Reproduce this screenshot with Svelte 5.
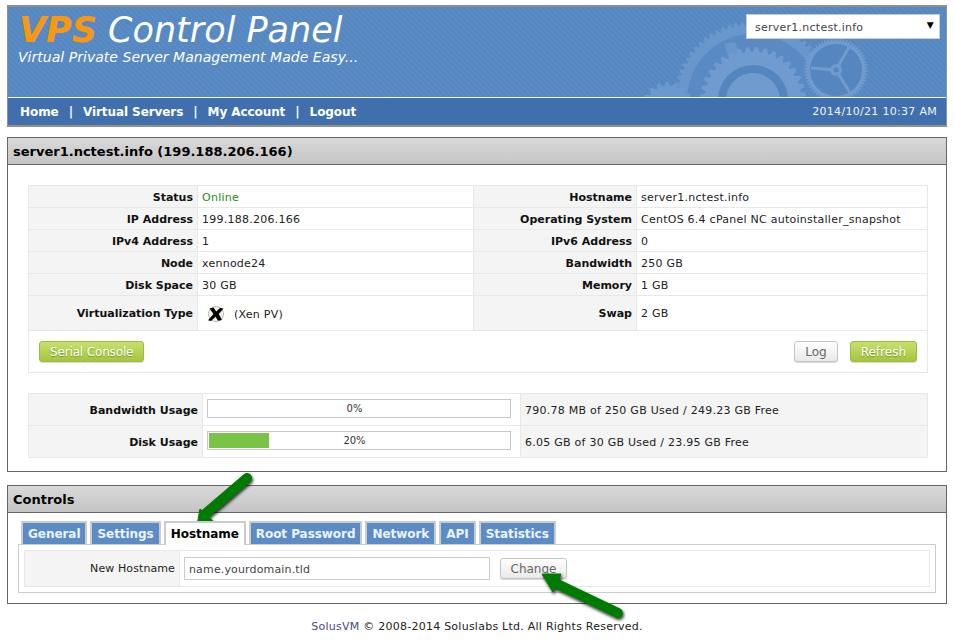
<script>
  const tabs = ['General', 'Settings', 'Hostname', 'Root Password', 'Network', 'API', 'Statistics'];
  const info = [
    ['Status', 'Online', 'Hostname', 'server1.nctest.info'],
    ['IP Address', '199.188.206.166', 'Operating System', 'CentOS 6.4 cPanel NC autoinstaller_snapshot'],
    ['IPv4 Address', '1', 'IPv6 Address', '0'],
    ['Node', 'xennode24', 'Bandwidth', '250 GB'],
    ['Disk Space', '30 GB', 'Memory', '1 GB']
  ];
  const usage = [
    { label: 'Bandwidth Usage', pct: 0, text: '790.78 MB of 250 GB Used / 249.23 GB Free' },
    { label: 'Disk Usage', pct: 20, text: '6.05 GB of 30 GB Used / 23.95 GB Free' }
  ];

  // toothed wheel outline
  function gear(cx, cy, r, teeth, depth) {
    let d = '';
    const step = (Math.PI * 2) / teeth;
    for (let i = 0; i < teeth; i++) {
      const a = i * step;
      const pts = [
        [r - depth, a],
        [r, a + step * 0.25],
        [r, a + step * 0.55],
        [r - depth, a + step * 0.8]
      ];
      for (const [rad, t] of pts) {
        d += (d ? 'L' : 'M') + (cx + rad * Math.cos(t)).toFixed(1) + ' ' + (cy + rad * Math.sin(t)).toFixed(1);
      }
    }
    return d + 'Z';
  }
</script>

<div class="page">
  <header class="top">
    <div class="banner">
      <svg class="gears" width="300" height="90" viewBox="0 0 300 90" aria-hidden="true">
        <g transform="translate(-624 -7)">
          <path d={gear(753, 100, 79, 72, 4)} fill="#6997cc" />
          <circle cx="753" cy="100" r="66" fill="#5a8ac3" />
          <path d="M724 44 L735 42 L742 62 L732 66Z" fill="#6997cc" />
          <path d={gear(668, 108, 26, 18, 4)} fill="#6c99cd" />
          <path d={gear(753, 100, 53, 36, 5)} fill="#6f9bcf" />
          <circle cx="753" cy="100" r="35" fill="#5585bf" />
          <circle cx="753" cy="100" r="27" fill="#6f9bcf" />
          <path d={gear(836, 70, 32, 60, 3)} fill="#6f9bcf" />
          <circle cx="836" cy="70" r="26" fill="#5686c0" />
          <path d="M811 68 L836 70 M836 70 L849 47 M836 70 L850 93" stroke="#6f9bcf" stroke-width="3" fill="none" />
          <circle cx="836" cy="70" r="6" fill="#6f9bcf" />
          <circle cx="836" cy="70" r="2.5" fill="#5686c0" />
        </g>
      </svg>
      <div class="brand">
        <h1><b>VPS</b> Control Panel</h1>
        <p>Virtual Private Server Management Made Easy...</p>
      </div>
      <div class="select">
        <span>server1.nctest.info</span>
        <i>▼</i>
      </div>
    </div>
    <nav>
      <div class="links">
        <a href="#home">Home</a><s>|</s><a href="#vs">Virtual Servers</a><s>|</s><a href="#acc">My Account</a><s>|</s><a href="#out">Logout</a>
      </div>
      <span class="date">2014/10/21 10:37 AM</span>
    </nav>
  </header>

  <section class="panel server">
    <h2>server1.nctest.info (199.188.206.166)</h2>
    <div class="body">
      <table class="info">
        <colgroup><col class="c1" /><col class="c2" /><col class="c3" /><col /></colgroup>
        <tbody>
          {#each info as row, i}
            <tr>
              <th>{row[0]}</th>
              <td class:online={i === 0}>{row[1]}</td>
              <th>{row[2]}</th>
              <td>{row[3]}</td>
            </tr>
          {/each}
          <tr class="tall">
            <th>Virtualization Type</th>
            <td>
              <span class="virt">
                <svg width="18" height="18" viewBox="0 0 18 18" aria-hidden="true">
                  <circle cx="9" cy="9" r="7.5" fill="#f2f2ea" stroke="#bbb" />
                  <path d="M2.5 3.5 L6.5 2.5 L9.2 6.5 L13 3 L16.5 3.5 L11.8 9 L15 15 L11 15.8 L8.6 11.8 L4 16 L1 15.2 L6.5 9Z" fill="#000" />
                </svg>
                <span class="virt-name">(Xen PV)</span>
              </span>
            </td>
            <th>Swap</th>
            <td>2 GB</td>
          </tr>
        </tbody>
      </table>
      <div class="actions">
        <button class="btn green">Serial Console</button>
        <span class="right">
          <button class="btn">Log</button>
          <button class="btn green">Refresh</button>
        </span>
      </div>

      <table class="usage">
        <tbody>
          {#each usage as u}
            <tr>
              <th>{u.label}</th>
              <td class="barcell">
                <div class="bar">
                  <div class="fill" style="width: {u.pct}%"></div>
                  <span>{u.pct}%</span>
                </div>
              </td>
              <td>{u.text}</td>
            </tr>
          {/each}
        </tbody>
      </table>
    </div>
  </section>

  <section class="panel controls">
    <h2>Controls</h2>
    <div class="ctl-body">
      <div class="tabs">
        {#each tabs as t}
          <button class="tab" class:active={t === 'Hostname'}>{t}</button>
        {/each}
      </div>
      <div class="tabbox">
        <div class="form">
          <label for="hn">New Hostname</label>
          <div class="field">
            <input id="hn" value="name.yourdomain.tld" />
            <button class="btn change">Change</button>
          </div>
        </div>
      </div>
    </div>
  </section>

  <footer><a href="#solus">SolusVM</a> © 2008-2014 Soluslabs Ltd. All Rights Reserved.</footer>

  <svg class="arrows" width="954" height="643" viewBox="0 0 954 643" aria-hidden="true">
    <defs>
      <filter id="sh" x="-30%" y="-30%" width="160%" height="160%">
        <feDropShadow dx="1" dy="2" stdDeviation="1.6" flood-color="#000" flood-opacity="0.8" />
      </filter>
    </defs>
    <g filter="url(#sh)" fill="#067a06" stroke="#067a06" stroke-linejoin="round">
      <path d="M247 478 L205 514" stroke-width="10" stroke-linecap="round" fill="none" />
      <path d="M197 526 L200 509 L216 524Z" stroke-width="1" />
      <path d="M618 613 L553 582" stroke-width="10" stroke-linecap="round" fill="none" />
      <path d="M542 574 L561 574 L553 592Z" stroke-width="1" />
    </g>
  </svg>
</div>

<style>
  :global(body) {
    background: #fff;
    font-family: "DejaVu Sans", Verdana, sans-serif;
    font-size: 11px;
    letter-spacing: 0.25px;
    color: #222;
  }

  .page {
    position: relative;
    width: 940px;
    height: 643px;
    padding: 5px 7px 0;
    overflow: hidden;
  }

  .top {
    border: 1px solid #8f8f8f;
    border-bottom-width: 2px;
    border-top-width: 2px;
    background: #3f70ad;
  }

  .banner {
    position: relative;
    height: 90px;
    display: flex;
    justify-content: space-between;
    border-bottom: 1px solid #fff;
    background: repeating-linear-gradient(45deg, #5587c1 0 2px, #5a8bc4 2px 4px);
  }

  .gears {
    position: absolute;
    left: 616px;
    top: 0;
  }

  .brand {
    position: relative;
    padding: 5px 0 0 10px;
    color: #fff;
  }

  h1 {
    margin: 0 0 0 1px;
    font-size: 35px;
    line-height: 36px;
    font-weight: normal;
    font-style: italic;
    letter-spacing: 0;
    white-space: nowrap;
  }

  h1 b {
    color: #f9980f;
    font-weight: bold;
    letter-spacing: 0;
  }

  .brand p {
    margin: 0;
    font-size: 14px;
    line-height: 18px;
    font-style: italic;
    letter-spacing: 0.03px;
  }

  .select {
    position: relative;
    height: 23px;
    width: 184px;
    margin: 7px 6px 0 0;
    padding: 0 0 0 8px;
    display: flex;
    justify-content: space-between;
    align-items: center;
    background: #fff;
    border: 1px solid #ccc;
    color: #444;
  }

  .select span {
    padding-top: 2px;
  }

  .select i {
    font-style: normal;
    font-size: 9px;
    color: #000;
    margin: -3px 5px 0 0;
  }

  nav {
    height: 27px;
    display: flex;
    justify-content: space-between;
    align-items: center;
    padding: 0 9px 0 12px;
    color: #fff;
  }

  .links {
    font-size: 12px;
    font-weight: bold;
    letter-spacing: -0.08px;
    display: flex;
  }

  .links a {
    color: #fff;
    text-decoration: none;
  }

  .links s {
    text-decoration: none;
    margin: 0 10px;
  }

  .date {
    font-size: 11px;
    letter-spacing: 0.3px;
    color: #f2f2f2;
  }

  .panel {
    border: 1px solid #666;
  }

  .panel h2 {
    margin: 0;
    height: 26px;
    line-height: 28px;
    padding-left: 5px;
    font-size: 13px;
    letter-spacing: 0;
    color: #000;
    background: linear-gradient(#d9d9d9, #c4c4c4);
    border-bottom: 1px solid #666;
  }

  .server {
    margin-top: 10px;
    height: 333px;
  }

  .body {
    padding: 20px 18px 0 20px;
  }

  table {
    width: 900px;
    border-collapse: collapse;
    table-layout: fixed;
  }

  th,
  td {
    border: 1px solid #e8e8e8;
    padding: 1px 4px 0;
    height: 20px;
    text-align: left;
    white-space: nowrap;
  }

  th {
    background: #f4f4f4;
    text-align: right;
    font-weight: bold;
    letter-spacing: 0;
    color: #111;
  }

  .c1 {
    width: 169px;
  }

  .c2 {
    width: 276px;
  }

  .c3 {
    width: 163px;
  }

  .online {
    color: #1c8a1c;
  }

  .tall th,
  .tall td {
    height: 33px;
  }

  .virt {
    display: inline-flex;
    align-items: center;
    gap: 9px;
    margin: 2px 0 0 5px;
    line-height: 18px;
  }

  .virt-name {
    margin-top: 2px;
  }

  .actions {
    width: 878px;
    height: 41px;
    padding: 0 10px;
    display: flex;
    justify-content: space-between;
    align-items: center;
    border: 1px solid #e8e8e8;
    border-top: 0;
  }

  .right {
    display: flex;
    gap: 12px;
  }

  .right .btn {
    letter-spacing: 0;
  }

  .btn {
    height: 21px;
    padding: 0 10px;
    border: 1px solid #c4c4c4;
    border-radius: 3px;
    background: linear-gradient(#fff, #e9e9e9);
    color: #666;
    font-family: "DejaVu Sans", Verdana, sans-serif;
    font-size: 12px;
    letter-spacing: -0.15px;
    box-shadow: 0 1px 1px rgba(0, 0, 0, 0.15);
  }

  .green {
    border-color: #9ebb3c;
    background: linear-gradient(#c8e06f, #a4c63e);
    color: #fff;
    text-shadow: 0 1px 1px rgba(90, 110, 20, 0.6);
  }

  .usage {
    margin-top: 20px;
  }

  .usage th {
    width: 165px;
    height: 30px;
  }

  .usage td {
    height: 30px;
    background: #f4f4f4;
  }

  .usage td.barcell {
    width: 309px;
    padding-top: 0;
    background: #fff;
  }

  .bar {
    position: relative;
    width: 300px;
    height: 15px;
    margin-top: -2px;
    border: 1px solid #c8c8c8;
    padding: 1px;
  }

  .fill {
    height: 15px;
    background: #79c447;
  }

  .bar span {
    position: absolute;
    inset: 1px 9px 0 0;
    text-align: center;
    line-height: 15px;
    font-size: 10px;
    letter-spacing: 0;
    color: #333;
  }

  .controls {
    margin-top: 13px;
    height: 117px;
  }

  .ctl-body {
    padding: 8px 10px 0;
  }

  .tabs {
    display: flex;
    gap: 3px;
    padding-left: 3px;
  }

  .tab {
    height: 23px;
    padding: 0 5px;
    border: 2px solid #ccc;
    border-bottom: 0;
    background: #5b8cc6;
    color: #eef3fa;
    font-family: "DejaVu Sans", Verdana, sans-serif;
    font-size: 12px;
    font-weight: bold;
    letter-spacing: -0.05px;
    position: relative;
  }

  .tab.active {
    height: 24px;
    margin-bottom: -1px;
    background: #fff;
    color: #000;
    z-index: 1;
  }

  .tabbox {
    border: 1px solid #ccc;
    padding: 5px;
    height: 37px;
  }

  .form {
    display: flex;
    height: 35px;
    border: 1px solid #e8e8e8;
  }

  .form label {
    width: 150px;
    padding-right: 4px;
    text-align: right;
    line-height: 35px;
    letter-spacing: 0.1px;
    background: #f4f4f4;
    border-right: 1px solid #e8e8e8;
  }

  .field {
    display: flex;
    align-items: center;
    gap: 10px;
    padding-left: 4px;
  }

  input {
    width: 296px;
    height: 20px;
    padding: 1px 4px 0;
    border: 1px solid #ccc;
    outline: 0;
    font-family: "DejaVu Sans", Verdana, sans-serif;
    font-size: 11px;
    letter-spacing: 0.15px;
    color: #444;
  }

  .change {
    width: 67px;
    padding: 0;
    letter-spacing: 0;
  }

  footer {
    margin-top: 16px;
    text-align: center;
    color: #222;
  }

  footer a {
    color: #4a4a80;
    text-decoration: none;
  }

  .arrows {
    position: absolute;
    left: 0;
    top: 0;
    pointer-events: none;
  }
</style>
